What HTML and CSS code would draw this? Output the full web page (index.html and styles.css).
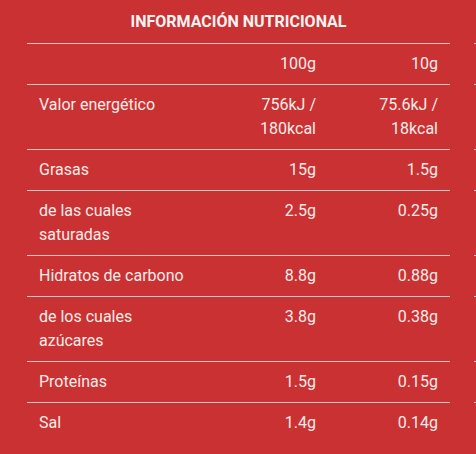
FILE: index.html
```html
<!DOCTYPE html>
<html lang="es">
<head>
<meta charset="utf-8">
<title>Información nutricional</title>
<link rel="stylesheet" href="styles.css">
</head>
<body>
<div class="slider">
  <section class="panel">
    <h2 class="title">INFORMACIÓN NUTRICIONAL</h2>
    <table class="nutri">
      <colgroup><col class="c1"><col class="c2"><col class="c3"></colgroup>
      <tr><td></td><td class="num">100g</td><td class="num">10g</td></tr>
      <tr><td>Valor energético</td><td class="num">756kJ / 180kcal</td><td class="num">75.6kJ / 18kcal</td></tr>
      <tr><td>Grasas</td><td class="num">15g</td><td class="num">1.5g</td></tr>
      <tr><td>de las cuales saturadas</td><td class="num">2.5g</td><td class="num">0.25g</td></tr>
      <tr><td>Hidratos de carbono</td><td class="num">8.8g</td><td class="num">0.88g</td></tr>
      <tr><td>de los cuales azúcares</td><td class="num">3.8g</td><td class="num">0.38g</td></tr>
      <tr><td>Proteínas</td><td class="num">1.5g</td><td class="num">0.15g</td></tr>
      <tr class="last"><td>Sal</td><td class="num">1.4g</td><td class="num">0.14g</td></tr>
    </table>
  </section>
  <section class="panel ghost" aria-hidden="true">
    <div class="ghost-title"></div>
    <div class="ghost-rows">
      <div class="g-row"></div>
      <div class="g-row tall"></div>
      <div class="g-row"></div>
      <div class="g-row tall"></div>
      <div class="g-row"></div>
      <div class="g-row tall"></div>
      <div class="g-row"></div>
      <div class="g-row last"></div>
    </div>
  </section>
</div>
</body>
</html>
```

FILE: styles.css
```css
html, body {
  margin: 0;
  padding: 0;
  background: #c93132;
  height: 100%;
}
body {
  font-family: Roboto, "Liberation Sans", sans-serif;
  color: #fbecea;
  overflow: hidden;
}
.slider {
  display: flex;
  gap: 24px;
  padding: 10px 0 0 27px;
}
.panel {
  flex: 0 0 423px;
  width: 423px;
}
.title {
  margin: 0 0 9px;
  font-size: 16px;
  line-height: 24px;
  font-weight: 700;
  text-align: center;
  color: #fdf3f2;
}
.nutri {
  width: 423px;
  border-collapse: collapse;
  table-layout: fixed;
  border-top: 1px solid #efc3c2;
}
.c1 { width: 179px; }
.c2 { width: 122px; }
.c3 { width: 122px; }
.nutri td {
  padding: 8px 12px;
  font-size: 16px;
  line-height: 24px;
  vertical-align: top;
  border-bottom: 1px solid #efc3c2;
}
.nutri tr.last td {
  border-bottom: none;
}
.nutri td.num {
  text-align: right;
}
.ghost-title {
  height: 24px;
  margin-bottom: 9px;
}
.ghost-rows {
  border-top: 1px solid #efc3c2;
}
.g-row {
  height: 40px;
  border-bottom: 1px solid #efc3c2;
}
.g-row.tall {
  height: 64px;
}
.g-row.last {
  border-bottom: none;
}
```
